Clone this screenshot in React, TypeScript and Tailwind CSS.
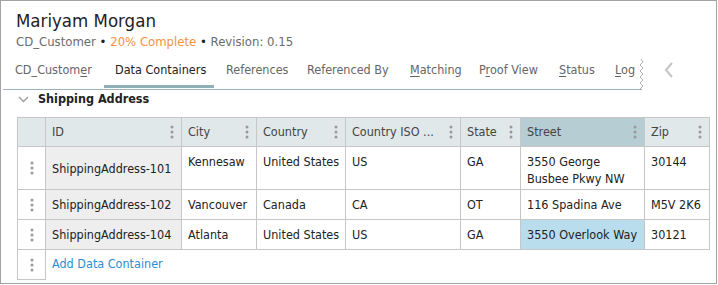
import React from "react";

const Kebab = ({ className = "" }: { className?: string }) => (
  <svg width="4" height="14" viewBox="0 0 4 14" className={className}>
    <circle cx="2" cy="2" r="1.5" fill="#9a9a9a" />
    <circle cx="2" cy="7" r="1.5" fill="#9a9a9a" />
    <circle cx="2" cy="12" r="1.5" fill="#9a9a9a" />
  </svg>
);

const cols = [
  { name: "ID", w: 136 },
  { name: "City", w: 75 },
  { name: "Country", w: 89 },
  { name: "Country ISO ...", w: 115 },
  { name: "State", w: 60 },
  { name: "Street", w: 124 },
  { name: "Zip", w: 65 },
];

const rows = [
  ["ShippingAddress-101", "Kennesaw", "United States", "US", "GA", "3550 George Busbee Pkwy NW", "30144"],
  ["ShippingAddress-102", "Vancouver", "Canada", "CA", "OT", "116 Spadina Ave", "M5V 2K6"],
  ["ShippingAddress-104", "Atlanta", "United States", "US", "GA", "3550 Overlook Way", "30121"],
];

const U = ({ children }: { children: React.ReactNode }) => (
  <span className="underline underline-offset-2 decoration-1">{children}</span>
);

export default function App() {
  const font = { fontFamily: "'DejaVu Sans Condensed', 'DejaVu Sans', sans-serif", fontStretch: "condensed" as const };
  return (
    <div
      className="w-[717px] h-[284px] border border-[#a3a3a3] bg-white overflow-hidden text-[13px] text-[#222]"
      style={font}
    >
      <div className="pl-[15px] pt-[7px]">
        <div className="text-[18.5px] leading-[26px] text-[#222]">Mariyam Morgan</div>
        <div className="text-[13px] leading-[16px] text-[#6b6b6b]">
          CD_Customer <span className="text-[#222]">•</span>{" "}
          <span className="text-[#f5923e]">20% Complete</span> <span className="text-[#222]">•</span> Revision: 0.15
        </div>
      </div>
      <div className="flex items-start">
        <div className="relative flex h-[40px] ml-[2px] w-[639px] border-b border-[#9bb3b9] whitespace-nowrap">
          <div className="flex h-full text-[12.5px] leading-[16px] text-[#666]">
            <div className="w-[101px] pl-[12px] pt-[12px]">
              CD_Custom<U>e</U>r
            </div>
            <div className="relative w-[110px] pl-[11px] pt-[12px] text-[#222]">
              Data Containers
              <div className="absolute left-0 right-0 bottom-[1px] h-[3px] bg-[#8fb0b8]" />
            </div>
            <div className="w-[93px] pl-[12px] pt-[12px]">References</div>
            <div className="w-[103px] pt-[12px]">Referenced By</div>
            <div className="w-[69px] pt-[12px]">
              <U>M</U>atching
            </div>
            <div className="w-[80px] pt-[12px]">
              P<U>r</U>oof View
            </div>
            <div className="w-[56px] pt-[12px]">
              <U>S</U>tatus
            </div>
            <div className="pt-[12px]">
              <U>L</U>og
            </div>
          </div>
          <svg className="absolute right-[-2px] top-[9px]" width="5" height="31" viewBox="0 0 5 31">
            <path
              d="M2 0 L4 3 L1 6 L4 9 L1 12 L4 15 L1 18 L4 21 L1 24 L4 27 L1 30 L2 31"
              fill="none"
              stroke="#9a9a9a"
              strokeWidth="0.8"
            />
          </svg>
        </div>
        <svg className="ml-[22px] mt-[12px]" width="10" height="16" viewBox="0 0 10 16">
          <path d="M8 1 L2 8 L8 15" fill="none" stroke="#c4c4c4" strokeWidth="2" />
        </svg>
      </div>
      <div className="flex items-center h-[19px]">
        <svg className="ml-[17px]" width="11" height="7" viewBox="0 0 11 7">
          <path d="M1 1 L5.5 5.5 L10 1" fill="none" stroke="#9a9a9a" strokeWidth="1.3" />
        </svg>
        <span className="ml-[9px] font-bold text-[12.5px] text-[#222]">Shipping Address</span>
      </div>
      <div className="ml-[16px] mt-[8px] text-[12.5px]">
        <table className="border-collapse table-fixed" style={{ width: 693 }}>
          <colgroup>
            <col style={{ width: 28 }} />
            {cols.map((c) => (
              <col key={c.name} style={{ width: c.w }} />
            ))}
          </colgroup>
          <thead>
            <tr className="h-[29px]">
              <th className="border border-[#c6c6c6] bg-[#e1e8ea]" />
              {cols.map((c) => (
                <th
                  key={c.name}
                  className={`border border-[#c6c6c6] font-normal text-left text-[#444] px-[6px] ${
                    c.name === "Street" ? "bg-[#b5cdd3]" : "bg-[#e1e8ea]"
                  }`}
                >
                  <div className="flex items-center justify-between">
                    <span className="whitespace-nowrap">{c.name}</span>
                    <Kebab className="mr-[1px]" />
                  </div>
                </th>
              ))}
            </tr>
          </thead>
          <tbody>
            {rows.map((r, i) => (
              <tr key={i} className={i === 0 ? "h-[43px]" : "h-[30px]"}>
                <td className="border border-[#c6c6c6] align-middle">
                  <div className="flex justify-center">
                    <Kebab />
                  </div>
                </td>
                {r.map((v, j) => (
                  <td
                    key={j}
                    className={`border border-[#c6c6c6] px-[6px] leading-[17px] ${
                      j === 0 ? "bg-[#eeeeee] align-middle" : i === 0 ? "align-top pt-[6px]" : "align-middle"
                    } ${i === 2 && j === 5 ? "bg-[#b9dded]" : ""} ${j !== 5 || i > 0 ? "whitespace-nowrap" : ""}`}
                  >
                    {v}
                  </td>
                ))}
              </tr>
            ))}
            <tr className="h-[30px]">
              <td className="border border-[#c6c6c6] align-middle">
                <div className="flex justify-center">
                  <Kebab />
                </div>
              </td>
              <td colSpan={7} className="px-[6px] text-[#2a8fd4] align-middle">
                Add Data Container
              </td>
            </tr>
          </tbody>
        </table>
      </div>
    </div>
  );
}
